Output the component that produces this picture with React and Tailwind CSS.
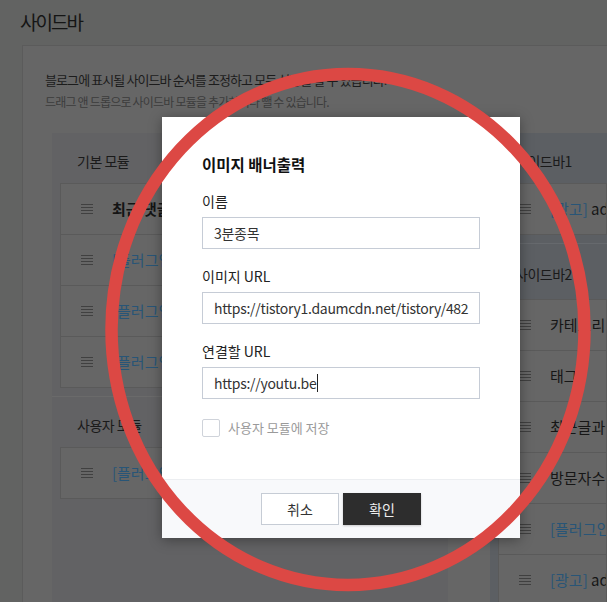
const leftItems = [
  { label: "최근 댓글", bold: true },
  { tag: "[플러그인]", label: " 구글 애드센스" },
  { tag: "[플러그인]", label: " 카운터 위젯" },
  { tag: "[플러그인]", label: " 방명록 위젯" },
];

const sidebar2 = [
  { label: "카테고리" },
  { label: "태그" },
  { label: "최근글과 인기글" },
  { label: "방문자수" },
  { tag: "[플러그인]", label: " 위젯" },
  { tag: "[광고]", label: " adsense" },
];

function Burger() {
  return (
    <span className="flex w-[12px] shrink-0 flex-col gap-[2px]">
      <span className="h-px bg-[#404040]" />
      <span className="h-px bg-[#404040]" />
      <span className="h-px bg-[#404040]" />
      <span className="h-px bg-[#404040]" />
    </span>
  );
}

function ModuleItem({ item }) {
  return (
    <div className="-mt-px flex h-[52px] items-center gap-[19px] overflow-hidden whitespace-nowrap border border-[#5a5a5a] bg-[#666666] pl-[20px] text-[15px] first:mt-0">
      <Burger />
      <span className={item.bold ? "font-bold text-[#141414]" : "text-[#161616]"}>
        {item.tag && <span className="text-[#285577]">{item.tag}</span>}
        {item.label}
      </span>
    </div>
  );
}

function GroupHead({ children, tall }) {
  return (
    <div className={`flex items-center pl-[25px] pt-[6px] text-[14px] tracking-[-0.5px] text-[#1a1a1a] ${tall ? "h-[55px]" : "h-[50px]"}`}>
      {children}
    </div>
  );
}

function Field({ label, value, cursor }) {
  return (
    <div className="mt-[17px]">
      <div className="text-[14px] leading-[20px] text-[#222]">{label}</div>
      <div className="mt-[6px] flex h-[32px] items-center overflow-hidden border border-[#c6ccd6] px-[11px] text-[14px] tracking-[-0.3px] text-[#333]">
        <span className="whitespace-nowrap">{value}</span>
        {cursor && <span className="ml-px h-[18px] w-px bg-[#222]" />}
      </div>
    </div>
  );
}

export default function App() {
  return (
    <div className="relative h-[602px] w-[607px] overflow-hidden bg-[#626362] font-['Noto_Sans_CJK_KR','Noto_Sans',sans-serif]">
      <div className="flex h-full w-[607px] flex-col">
        <h1 className="h-[45px] pl-[20px] pt-[8px] text-[19px] leading-[28px] tracking-[-2px] text-[#151515]">사이드바</h1>
        <div className="ml-[22px] flex min-w-0 flex-1 flex-col overflow-hidden border-l border-t border-[#5b5b5b] bg-[#666666]">
          <div className="pl-[22px] pt-[23px]">
            <p className="text-[13px] leading-[22px] tracking-[-0.9px] text-[#1c1c1c]">블로그에 표시될 사이드바 순서를 조정하고 모든 설정을 할 수 있습니다.</p>
            <p className="text-[12px] leading-[22px] tracking-[-0.8px] text-[#3c3c3c]">드래그 앤 드롭으로 사이드바 모듈을 추가하거나 뺄 수 있습니다.</p>
          </div>
          <div className="mt-[20px] flex min-w-0 flex-1 pl-[29px]">
            <div className="flex w-[396px] shrink-0 flex-col bg-[#626264]">
              <GroupHead>기본 모듈</GroupHead>
              <div className="px-[8px]">
                {leftItems.map((it, i) => (
                  <ModuleItem key={i} item={it} />
                ))}
              </div>
              <div className="mt-[8px] border-t border-[#6a6a6a]">
                <GroupHead>사용자 모듈</GroupHead>
                <div className="px-[8px]">
                  <ModuleItem item={{ tag: "[플러그인]", label: " 이미지 배너출력" }} />
                </div>
              </div>
            </div>
            <div className="ml-[42px] flex min-w-0 flex-1 flex-col bg-[#5c5f63]">
              <GroupHead>사이드바1</GroupHead>
              <div className="pl-[8px]">
                <ModuleItem item={{ tag: "[광고]", label: " adsense" }} />
              </div>
              <div className="mt-[8px] border-t border-[#66696d]">
                <GroupHead tall>사이드바2</GroupHead>
                <div className="pl-[8px]">
                  {sidebar2.map((it, i) => (
                    <ModuleItem key={i} item={it} />
                  ))}
                </div>
              </div>
            </div>
          </div>
        </div>
      </div>

      <div className="absolute left-[162px] top-[117px] w-[358px] bg-white shadow-[0_2px_12px_rgba(0,0,0,0.35)]">
        <div className="h-[362px] px-[40px] pt-[37px]">
          <h2 className="text-[15.5px] font-bold leading-[20px] text-[#111]">이미지 배너출력</h2>
          <div className="mt-[2px]">
            <Field label="이름" value="3분종목" />
          </div>
          <Field label="이미지 URL" value="https://tistory1.daumcdn.net/tistory/482" />
          <Field label="연결할 URL" value="https://youtu.be" cursor />
          <label className="mt-[19px] flex items-center gap-[8px]">
            <span className="h-[18px] w-[18px] rounded-[2px] border border-[#cfd3da] bg-white" />
            <span className="text-[13px] text-[#9a9a9a]">사용자 모듈에 저장</span>
          </label>
        </div>
        <div className="flex h-[59px] justify-center gap-[4px] border-t border-[#eceef1] bg-[#f8f9fb] pt-[13px]">
          <button className="h-[32px] w-[78px] border border-[#c6ccd5] bg-white text-[14px] text-[#333]">취소</button>
          <button className="h-[32px] w-[78px] bg-[#2d2d2d] text-[14px] text-[#eee] shadow-[0_1px_2px_rgba(0,0,0,0.2)]">확인</button>
        </div>
      </div>

      <svg className="pointer-events-none absolute inset-0" width="607" height="602" viewBox="0 0 607 602">
        <ellipse cx="348" cy="329.5" rx="236.5" ry="255.5" fill="none" stroke="#dc4844" strokeWidth="12.5" />
      </svg>
    </div>
  );
}
